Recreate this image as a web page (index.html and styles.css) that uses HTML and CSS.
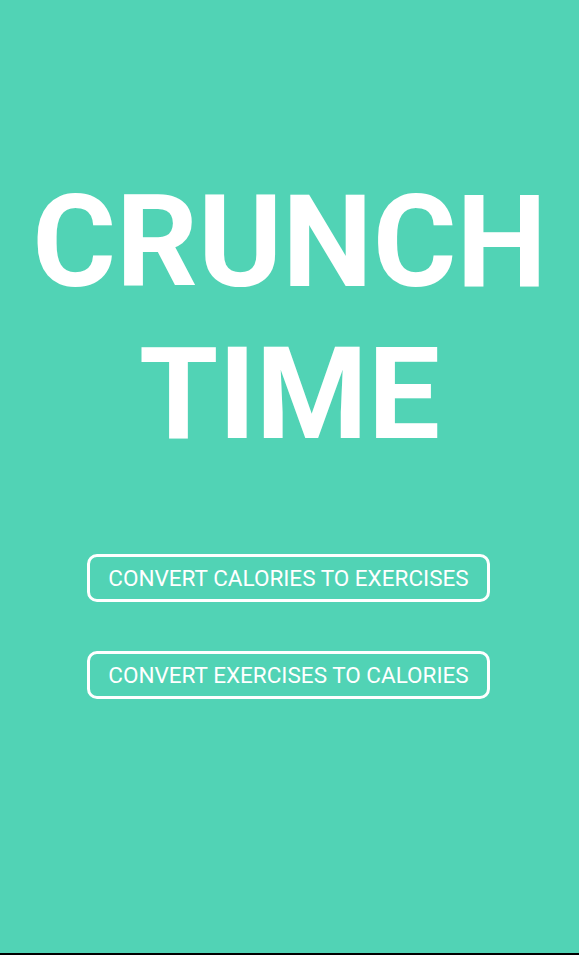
FILE: index.html
```html
<!DOCTYPE html>
<html lang="en">
<head>
<meta charset="utf-8">
<title>Crunch Time</title>
<link rel="stylesheet" href="styles.css">
</head>
<body>
<main class="screen">
  <h1 class="title">CRUNCH<br>TIME</h1>
  <div class="actions">
    <button class="action-btn">CONVERT CALORIES TO EXERCISES</button>
    <button class="action-btn">CONVERT EXERCISES TO CALORIES</button>
  </div>
</main>
</body>
</html>
```
FILE: styles.css
```css
html, body {
  margin: 0;
  padding: 0;
  background: #000;
}
.screen {
  box-sizing: border-box;
  height: 953px;
  background: #51d3b5;
  display: flex;
  flex-direction: column;
  align-items: center;
  padding-top: 166px;
  font-family: Roboto, "Liberation Sans", sans-serif;
  color: #fff;
}
.title {
  margin: 0;
  font-size: 128px;
  font-weight: 700;
  line-height: 152px;
  text-align: center;
}
.actions {
  display: flex;
  flex-direction: column;
  align-items: center;
  gap: 49px;
  margin-top: 84px;
  margin-right: 2px;
}
.action-btn {
  box-sizing: border-box;
  width: 403px;
  height: 48px;
  border: 3px solid #fff;
  border-radius: 10px;
  background: transparent;
  color: #fff;
  font-family: Roboto, "Liberation Sans", sans-serif;
  font-size: 22.5px;
  font-weight: 400;
  padding: 0;
  cursor: pointer;
}
```
